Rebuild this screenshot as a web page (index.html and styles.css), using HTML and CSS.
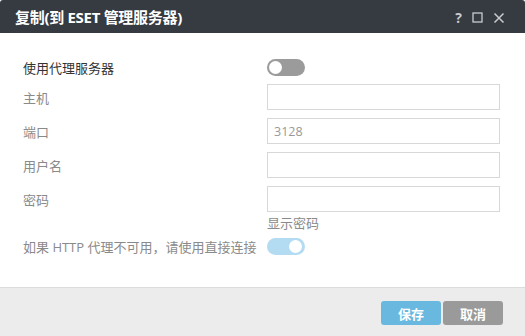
FILE: index.html
```html
<!DOCTYPE html>
<html lang="zh">
<head>
<meta charset="utf-8">
<link rel="stylesheet" href="styles.css">
</head>
<body>
<div class="dialog">
  <div class="header">
    <div class="title">复制(到 ESET 管理服务器)</div>
    <div class="actions">
      <span class="help">?</span>
      <svg class="icon" width="11" height="11" viewBox="0 0 11 11"><rect x="1" y="1" width="9" height="9" fill="none" stroke="#c9cbcf" stroke-width="1.3"/></svg>
      <svg class="icon" width="12" height="12" viewBox="0 0 12 12"><path d="M1.5 1.5L10.5 10.5M10.5 1.5L1.5 10.5" stroke="#c9cbcf" stroke-width="1.5"/></svg>
    </div>
  </div>
  <div class="body">
    <div class="row first">
      <div class="label dark">使用代理服务器</div>
      <div class="toggle off"><span class="knob"></span></div>
    </div>
    <div class="row">
      <div class="label">主机</div>
      <div class="input"></div>
    </div>
    <div class="row">
      <div class="label">端口</div>
      <div class="input"><span class="val">3128</span></div>
    </div>
    <div class="row">
      <div class="label">用户名</div>
      <div class="input"></div>
    </div>
    <div class="row">
      <div class="label">密码</div>
      <div class="input"></div>
    </div>
    <div class="row show">
      <div class="label"></div>
      <div class="link">显示密码</div>
    </div>
    <div class="row tog">
      <div class="label">如果 HTTP 代理不可用，请使用直接连接</div>
      <div class="toggle on"><span class="knob"></span></div>
    </div>
  </div>
  <div class="footer">
    <button class="btn save">保存</button>
    <button class="btn cancel">取消</button>
  </div>
</div>
</body>
</html>
```

FILE: styles.css
```css
html, body {
  margin: 0;
  padding: 0;
  background: #ffffff;
}
body {
  font-family: "Open Sans", "Noto Sans CJK SC", sans-serif;
  font-size: 13px;
  color: #8a8a8a;
}
.dialog {
  width: 525px;
  height: 336px;
  display: flex;
  flex-direction: column;
  border-radius: 3px 3px 0 0;
  overflow: hidden;
}
.header {
  height: 33px;
  background: #363a41;
  display: flex;
  align-items: center;
  justify-content: space-between;
  padding: 0 20px 0 15px;
  flex: none;
}
.title {
  color: #ffffff;
  font-size: 15px;
  font-weight: 700;
  letter-spacing: -0.3px;
}
.actions {
  display: flex;
  align-items: center;
  gap: 10px;
  padding-top: 2px;
}
.help {
  color: #c9cbcf;
  font-weight: 700;
  font-size: 14px;
}
.icon { display: block; }
.body {
  flex: 1;
  background: #ffffff;
  padding-top: 26px;
}
.row {
  display: flex;
  align-items: center;
  height: 26px;
  margin-bottom: 8px;
}
.row.first {
  height: 18px;
  margin-bottom: 8px;
  margin-top: -1px;
}
.row.show {
  height: 18px;
  margin-top: -7px;
  margin-bottom: 6px;
}
.row.tog {
  height: 18px;
}
.label {
  width: 244px;
  padding-left: 23px;
  flex: none;
  white-space: nowrap;
}
.label.dark { color: #333333; }
.input {
  width: 225px;
  height: 24px;
  border: 1px solid #d8d8d8;
  display: flex;
  align-items: center;
  padding-left: 6px;
  box-sizing: content-box;
}
.val { color: #999999; font-size: 12.5px; }
.link { color: #8a8a8a; }
.toggle {
  width: 38px;
  height: 17px;
  border-radius: 9px;
  position: relative;
}
.toggle.off { background: #9b9b9b; }
.toggle.on { background: #b3dbf2; }
.knob {
  position: absolute;
  top: 2px;
  width: 13px;
  height: 13px;
  border-radius: 50%;
  background: #ffffff;
}
.toggle.off .knob { left: 2px; }
.toggle.on .knob { right: 3px; }
.footer {
  height: 49px;
  flex: none;
  background: #ececec;
  border-top: 1px solid #dcdcdc;
  display: flex;
  align-items: flex-start;
  justify-content: flex-end;
  gap: 2px;
  padding: 13px 22px 0 0;
  box-sizing: border-box;
}
.btn {
  width: 60px;
  height: 24px;
  border: none;
  border-radius: 3px;
  color: #ffffff;
  font-family: "Open Sans", "Noto Sans CJK SC", sans-serif;
  font-size: 13px;
  font-weight: 700;
  padding: 0;
}
.save { background: #68b8e0; }
.cancel { background: #9a9a9a; }
```
